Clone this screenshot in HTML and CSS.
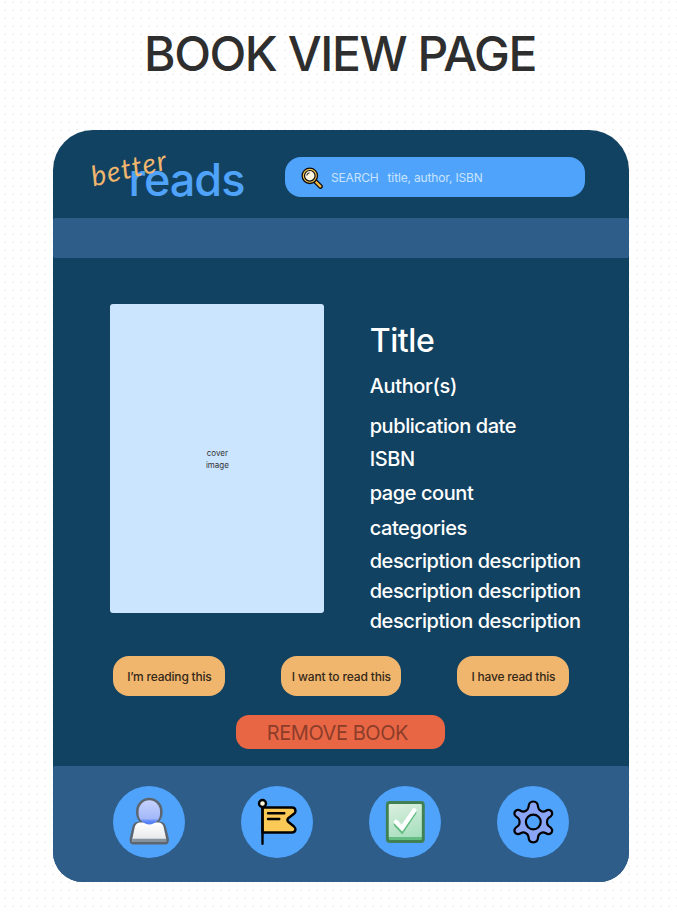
FILE: index.html
```html
<!DOCTYPE html>
<html lang="en">
<head>
<meta charset="utf-8">
<title>Book view page</title>
<link rel="stylesheet" href="styles.css">
</head>
<body>
<h1 class="page-title">BOOK VIEW PAGE</h1>
<main class="card">
  <header class="header">
    <div class="logo"><span class="logo-reads">reads</span><span class="logo-better">better</span></div>
    <div class="search">
      <svg class="search-icon" viewBox="0 0 22 22" width="22" height="22">
        <path d="M14 14 L19.500 19.500" stroke="#0b0b12" stroke-width="4.600" stroke-linecap="round"/>
        <path d="M14.500 14.500 L19.400 19.400" stroke="#f2b83f" stroke-width="2.300" stroke-linecap="round"/>
        <circle cx="8.800" cy="8.800" r="7.700" fill="#f2c14b" stroke="#0b0b12" stroke-width="1.300"/>
        <circle cx="8.800" cy="8.800" r="5.300" fill="#fff5dc" stroke="#0b0b12" stroke-width="1.200"/>
        <path d="M5.800 8.500 Q6 6 8.500 5.800" fill="none" stroke="#0b0b12" stroke-width="1"/>
      </svg>
      <span class="search-label">SEARCH</span><span class="search-hint">title, author, ISBN</span>
    </div>
  </header>
  <div class="band"></div>
  <section class="book">
    <div class="cover">cover<br>image</div>
    <div class="details">
      <h2 class="title">Title</h2>
      <p class="line author">Author(s)</p>
      <p class="line published">publication date</p>
      <p class="line isbn">ISBN</p>
      <p class="line pages">page count</p>
      <p class="line categories">categories</p>
      <p class="line description">description description<br>description description<br>description description</p>
    </div>
  </section>
  <div class="actions">
    <button class="action reading">I’m reading this</button>
    <button class="action want">I want to read this</button>
    <button class="action have">I have read this</button>
  </div>
  <button class="remove">REMOVE BOOK</button>
  <nav class="nav">
    <a class="nav-item">
      <svg viewBox="0 0 72 72" width="72" height="72">
        <defs>
          <linearGradient id="head" x2="0" y2="1"><stop offset="0" stop-color="#c4d1fc"/><stop offset=".75" stop-color="#a4b9fa"/><stop offset=".86" stop-color="#608afa"/><stop offset="1" stop-color="#4f7df5"/></linearGradient>
          <linearGradient id="body" x2="0" y2="1"><stop offset="0" stop-color="#fff"/><stop offset="1" stop-color="#e4e5e8"/></linearGradient>
        </defs>
        <rect x="23" y="11.800" width="26.600" height="28" rx="13.300" fill="#5d6670"/>
        <path d="M26 35.500 H46.600 Q51.800 35.800 53 41 L55.800 52.500 V55 Q55.800 58.400 52 58.400 H20.500 Q16.700 58.400 16.700 55 V52.500 L19.300 41 Q20.500 35.800 26 35.500Z" fill="#5d6670"/>
        <path d="M26.500 36.500 H46 Q49.700 37 50.600 41 L53.100 52.500 V55.800 H19.400 V52.500 L21.800 41 Q22.800 37 26.500 36.500Z" fill="url(#body)"/>
        <path d="M19.400 52.700 H53.100 V55 Q53 56 52 56 H20.500 Q19.400 56 19.400 55Z" fill="#84929e"/>
        <rect x="25.600" y="14.300" width="21.400" height="24.200" rx="10.700" fill="url(#head)"/>
      </svg>
    </a>
    <a class="nav-item">
      <svg viewBox="0 0 72 72" width="72" height="72" stroke="#000" stroke-width="2.400" stroke-linecap="round" stroke-linejoin="round">
        <path d="M21.500 21.500 H51 Q54.500 21.500 54.500 25 Q54.500 26.500 53 27.800 L47.500 32 Q45.300 34 47.500 36 L53 40.500 Q54.500 42 54.500 43.500 Q54 46.500 51 46.500 H21.500Z" fill="#fac956"/>
        <path d="M21.500 21 V57.700 M27 27.300 H43.300 M27 33 H38.300" fill="none"/>
        <circle cx="21.500" cy="17.500" r="3.500" fill="#fff6df"/>
      </svg>
    </a>
    <a class="nav-item">
      <svg viewBox="0 0 72 72" width="72" height="72">
        <defs><linearGradient id="box" x2=".3" y2="1"><stop offset="0" stop-color="#dff0e1"/><stop offset="1" stop-color="#a7dfbe"/></linearGradient></defs>
        <rect x="18.300" y="16.500" width="36" height="39" rx="2.500" fill="url(#box)"/>
        <path d="M19 51 H54 V54.500 H19Z" fill="#64bd82"/>
        <rect x="18.300" y="16.500" width="36" height="39" rx="2.500" fill="none" stroke="#408052" stroke-width="2.900"/>
        <path d="M27 38.500 L33 44.800 L45.300 26.500" fill="none" stroke="#64bd82" stroke-width="4.500" stroke-linecap="round"/>
        <path d="M27 36 L33 42 L45.300 24.300" fill="none" stroke="#fff" stroke-width="4.500" stroke-linecap="round"/>
      </svg>
    </a>
    <a class="nav-item">
      <svg viewBox="0 0 72 72" width="72" height="72" stroke="#000" stroke-width="2.200">
        <path d="M31.500 21 Q31.800 15.500 36.300 15.500 Q40.800 15.500 41.100 21 Q41.300 23.500 44 25 Q46.300 26.300 48.500 25 C53 22 55.800 25.500 55 28.700 Q54.300 30.500 51.500 32 Q50 33.200 50 35.900 Q50 38.700 51.500 39.900 Q54.300 41.500 55 43.300 C55.800 46.500 53 50 48.500 47 Q46.300 45.700 44 46.900 Q41.300 48.300 41.100 51 Q40.800 56.400 36.300 56.400 Q31.800 56.400 31.500 51 Q31.300 48.300 28.600 46.900 Q26.300 45.700 24.100 47 C19.600 50 16.800 46.500 17.600 43.300 Q18.300 41.500 21.100 39.900 Q22.600 38.700 22.600 35.900 Q22.600 33.200 21.100 32 Q18.300 30.500 17.600 28.700 C16.800 25.500 19.600 22 24.100 25 Q26.300 26.300 28.600 25 Q31.300 23.500 31.500 21Z" fill="#8aa5f5" stroke-linejoin="round"/>
        <circle cx="36.300" cy="36" r="7.400" fill="#4fa3fb"/>
      </svg>
    </a>
  </nav>
</main>
</body>
</html>
```

FILE: styles.css
```css
* { box-sizing: border-box; }
body {
  margin: 0;
  height: 913px;
  overflow: hidden;
  font-family: Inter, "Liberation Sans", sans-serif;
  background: conic-gradient(from 270deg at 2px 2px, #f4f4f4 90deg, #fff 0) 4px 1px / 8px 8px;
}
h1, h2, p { margin: 0; font-weight: 400; }
button { border: 0; padding: 0; font: inherit; }
.page-title {
  height: 130px;
  padding: 24px 0 0 3px;
  text-align: center;
  font-size: 48px;
  line-height: 60px;
  font-weight: 450;
  letter-spacing: -1.450px;
  color: #2e2e2e;
}
.card {
  width: 576px;
  height: 752px;
  margin-left: 53.4px;
  display: flex;
  flex-direction: column;
  background: #124261;
  border-radius: 40px 40px 30px 30px;
}
.header {
  height: 88px;
  flex: none;
  display: flex;
  align-items: flex-start;
  justify-content: space-between;
  padding: 27px 44px 0 75px;
}
.logo { position: relative; }
.logo-reads {
  display: block;
  font-size: 45px;
  line-height: 46px;
  font-weight: 500;
  letter-spacing: -1px;
  color: #4fa3fb;
}
.logo-better {
  position: absolute;
  left: -38px;
  top: -6px;
  font: italic 400 28px/32px Lato, sans-serif;
  letter-spacing: 1.2px;
  color: #f0b66d;
  transform: rotate(-13deg);
}
.search {
  width: 300.500px;
  height: 40px;
  display: flex;
  align-items: center;
  padding-left: 16px;
  border-radius: 16px;
  background: #4fa3fb;
  color: #c9e3fd;
  font-size: 12px;
  letter-spacing: -.15px;
}
.search-icon { margin: 2px 8px 0 0; flex: none; }
.search-label { margin-right: 9px; }
.band {
  flex: none;
  width: 576px;
  height: 40px;
  border-radius: 2px;
  background: #2e5d89;
}
.book { display: flex; height: 398px; flex: none; padding: 46px 0 0 57px; }
.cover {
  width: 214px;
  height: 309px;
  display: flex;
  align-items: center;
  justify-content: center;
  text-align: center;
  border-radius: 3px;
  background: #cbe5ff;
  color: #333;
  font-size: 8px;
  line-height: 12px;
}
.details { margin: 16px 0 0 45.300px; color: #fff; white-space: nowrap; }
.title { font-size: 32px; line-height: 41px; font-weight: 450; letter-spacing: -.4px; }
.line { font-size: 20px; line-height: 30px; font-weight: 450; letter-spacing: -.430px; }
.author { margin-top: 10px; letter-spacing: -.35px; }
.published { margin-top: 10px; }
.isbn { margin-top: 3px; }
.pages { margin-top: 4px; }
.categories { margin-top: 5px; }
.description { margin-top: 3px; }
.actions { display: flex; justify-content: space-between; padding: 0 60px; }
.action {
  height: 40px;
  border-radius: 16px;
  background: #f0b66d;
  color: #35291a;
  font-size: 12px;
  font-weight: 450;
  letter-spacing: -.2px;
}
.reading, .have { width: 112px; }
.want { width: 120px; letter-spacing: -.15px; }
.remove {
  flex: none;
  width: 209px;
  height: 34px;
  margin: 19px 0 0 183px;
  padding: 1px 7px 0 0;
  border-radius: 13px;
  background: #e96645;
  color: #8c3d29;
  font-size: 20px;
  letter-spacing: -.45px;
}
.nav {
  width: 576px;
  margin-top: 17px;
  height: 116px;
  display: flex;
  justify-content: space-between;
  padding: 20px 60px 0;
  background: #2e5d89;
  border-radius: 2px 2px 30px 30px;
}
.nav-item { width: 72px; height: 72px; border-radius: 50%; background: #4fa3fb; }
.nav-item svg { display: block; }
```
